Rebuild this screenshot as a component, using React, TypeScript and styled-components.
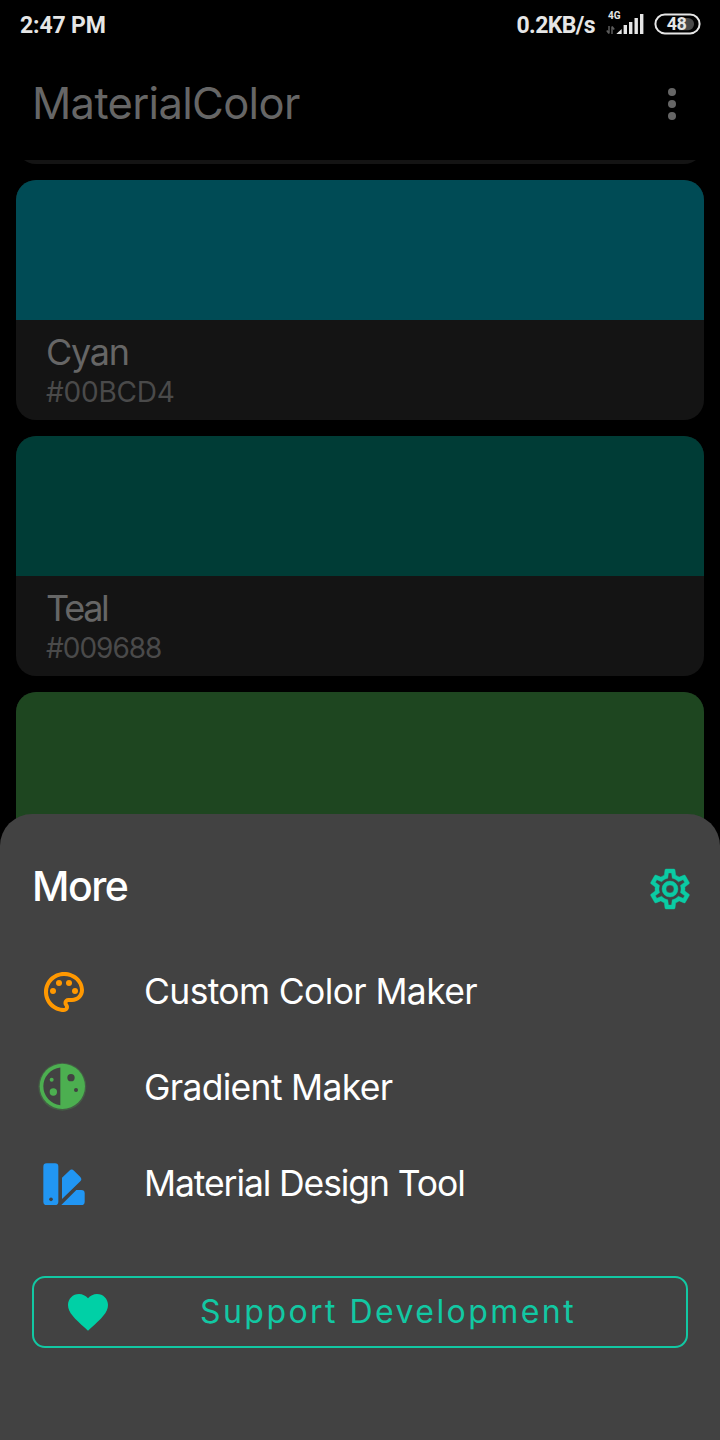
import React from "react";
import styled, { createGlobalStyle } from "styled-components";

const Global = createGlobalStyle`
  * { box-sizing: border-box; }
  html, body { margin: 0; padding: 0; background: #000; }
`;

const Screen = styled.main`
  position: relative;
  display: flex;
  flex-direction: column;
  width: 720px;
  height: 1440px;
  overflow: hidden;
  background: #000;
  font-family: Inter, "Liberation Sans", sans-serif;
`;

const StatusBar = styled.div`
  display: flex;
  align-items: center;
  height: 48px;
  padding: 2px 19px 0 20px;
  color: #e6e6e6;
  font: 700 23px/28px Roboto, sans-serif;
`;

const Clock = styled.span`
  margin: 1px auto 0 0;
  letter-spacing: -0.15px;
`;

const Speed = styled.span`
  margin: 1px 11px 0 0;
  letter-spacing: -0.6px;
`;

const StatusIcon = styled.svg`
  display: block;
  flex: none;
  margin-top: -2px;
`;

const AppBar = styled.header`
  display: flex;
  align-items: center;
  justify-content: space-between;
  height: 112px;
  padding: 0 24px 0 32px;
`;

const Title = styled.h1`
  margin: 0;
  padding-bottom: 2px;
  color: #666;
  font-size: 43.5px;
  font-weight: 400;
  line-height: 56px;
  letter-spacing: -0.67px;
`;

const List = styled.section`
  flex: 1;
  display: flex;
  flex-direction: column;
  gap: 16px;
  min-height: 0;
  padding: 0 16px;
  overflow: hidden;
`;

const Card = styled.article<{ $scrolled?: boolean }>`
  flex: none;
  height: 240px;
  margin-top: ${(p) => (p.$scrolled ? "-236px" : "0")};
  border-radius: 20px;
  overflow: hidden;
  background: #141414;
`;

const Swatch = styled.div<{ $color: string }>`
  height: 140px;
  background: ${(p) => p.$color};
`;

const CardText = styled.div`
  padding: 9px 30px;
`;

const Name = styled.div<{ $spacing: number }>`
  color: #666;
  font-size: 36px;
  line-height: 46px;
  letter-spacing: ${(p) => p.$spacing}px;
`;

const Hex = styled.div<{ $spacing: number }>`
  color: #4a4a4a;
  font-size: 28px;
  line-height: 34px;
  letter-spacing: ${(p) => p.$spacing}px;
`;

const Sheet = styled.section`
  position: absolute;
  left: 0;
  right: 0;
  bottom: 0;
  height: 626px;
  padding: 39px 32px 0;
  border-radius: 32px 32px 0 0;
  background: #424242;
`;

const SheetHeader = styled.div`
  display: flex;
  align-items: center;
  justify-content: space-between;
  height: 72px;
  margin-right: -6px;
`;

const SheetTitle = styled.h2`
  margin: 0;
  padding-bottom: 6px;
  color: #fff;
  font-size: 41px;
  font-weight: 500;
  line-height: 66px;
  letter-spacing: -1.5px;
`;

const Menu = styled.nav`
  display: flex;
  flex-direction: column;
  padding-top: 19px;
`;

const MenuItem = styled.a`
  display: flex;
  align-items: center;
  height: 96px;
`;

const MenuIcon = styled.svg`
  flex: none;
  display: block;
  width: 80px;
  height: 70px;
  margin-left: -8px;
`;

const MenuLabel = styled.span<{ $spacing: number }>`
  margin-left: 40px;
  color: #fff;
  font-size: 35.5px;
  line-height: 48px;
  letter-spacing: ${(p) => p.$spacing}px;
  white-space: nowrap;
`;

const Support = styled.button`
  display: flex;
  align-items: center;
  width: 656px;
  height: 72px;
  margin: 44px 0 0;
  padding: 0 30px;
  border: 2px solid #12c8a3;
  border-radius: 13px;
  background: transparent;
  color: #12c8a3;
  font: 400 32px/40px Inter, sans-serif;
`;

const SupportLabel = styled.span`
  margin-left: 88px;
  letter-spacing: 2.45px;
  white-space: nowrap;
`;

const bars = [
  { x: 17.6, h: 9 },
  { x: 23, h: 12 },
  { x: 28.5, h: 16 },
  { x: 34, h: 20 },
];

function Signal() {
  return (
    <StatusIcon width="47" height="28" viewBox="0 0 47 28">
      <text x="2" y="9" fill="#e6e6e6" fontFamily="Roboto" fontWeight="700" fontSize="10">4G</text>
      <path d="M3 16v7.5M0.8 20.5l2.2 3M6 24v-7.5M6 16.5l2.2 3" stroke="#5c5c5c" strokeWidth="1.5" fill="none" />
      <path d="M10.3 24l5.4-5v5z" fill="#e6e6e6" />
      {bars.map((b) => (
        <rect key={b.x} x={b.x} y={24 - b.h} width="3.4" height={b.h} fill="#e6e6e6" />
      ))}
    </StatusIcon>
  );
}

function Battery() {
  return (
    <StatusIcon width="48" height="24" viewBox="0 0 48 24">
      <path d="M26 6h9a6.1 6.1 0 0 1 0 12.2h-9z" fill="#484848" />
      <rect x="2.4" y="2.4" width="44.2" height="19" rx="9.5" fill="none" stroke="#e6e6e6" strokeWidth="2" />
      <text x="13.8" y="18.1" fill="#e6e6e6" fontFamily="Roboto" fontWeight="700" fontSize="18" textLength="20">48</text>
    </StatusIcon>
  );
}

function App() {
  return (
    <>
      <Global />
      <Screen>
        <StatusBar>
          <Clock>2:47 PM</Clock>
          <Speed>0.2KB/s</Speed>
          <Signal />
          <Battery />
        </StatusBar>
        <AppBar>
          <Title>MaterialColor</Title>
          <svg width="48" height="48" viewBox="0 0 24 24" fill="#666">
            <circle cx="12" cy="6" r="2" />
            <circle cx="12" cy="12" r="2" />
            <circle cx="12" cy="18" r="2" />
          </svg>
        </AppBar>
        <List>
          <Card $scrolled />
          <Card>
            <Swatch $color="#004b55" />
            <CardText>
              <Name $spacing={-1.3}>Cyan</Name>
              <Hex $spacing={-0.2}>#00BCD4</Hex>
            </CardText>
          </Card>
          <Card>
            <Swatch $color="#003c36" />
            <CardText>
              <Name $spacing={-2.3}>Teal</Name>
              <Hex $spacing={-1}>#009688</Hex>
            </CardText>
          </Card>
          <Card>
            <Swatch $color="#1e4620" />
          </Card>
        </List>
        <Sheet>
          <SheetHeader>
            <SheetTitle>More</SheetTitle>
            <svg width="48" height="48" viewBox="0 0 24 24" fill="#0bcba4">
              <path d="M12,8A4,4 0 0,1 16,12A4,4 0 0,1 12,16A4,4 0 0,1 8,12A4,4 0 0,1 12,8M12,10A2,2 0 0,0 10,12A2,2 0 0,0 12,14A2,2 0 0,0 14,12A2,2 0 0,0 12,10M10,22C9.75,22 9.54,21.82 9.5,21.58L9.13,18.93C8.5,18.68 7.96,18.34 7.44,17.94L4.95,18.95C4.73,19.03 4.46,18.95 4.34,18.73L2.34,15.27C2.21,15.05 2.27,14.78 2.46,14.63L4.57,12.97L4.5,12L4.57,11L2.46,9.37C2.27,9.22 2.21,8.95 2.34,8.73L4.34,5.27C4.46,5.05 4.73,4.96 4.95,5.05L7.44,6.05C7.96,5.66 8.5,5.32 9.13,5.07L9.5,2.42C9.54,2.18 9.75,2 10,2H14C14.25,2 14.46,2.18 14.5,2.42L14.87,5.07C15.5,5.32 16.04,5.66 16.56,6.05L19.05,5.05C19.27,4.96 19.54,5.05 19.66,5.27L21.66,8.73C21.79,8.95 21.73,9.22 21.54,9.37L19.43,11L19.5,12L19.43,13L21.54,14.63C21.73,14.78 21.79,15.05 21.66,15.27L19.66,18.73C19.54,18.95 19.27,19.04 19.05,18.95L16.56,17.95C16.04,18.34 15.5,18.68 14.87,18.93L14.5,21.58C14.46,21.82 14.25,22 14,22H10M11.25,4L10.88,6.61C9.68,6.86 8.62,7.5 7.85,8.39L5.44,7.35L4.69,8.65L6.8,10.2C6.4,11.37 6.4,12.64 6.8,13.8L4.68,15.36L5.43,16.66L7.86,15.62C8.63,16.5 9.68,17.14 10.87,17.38L11.24,20H12.76L13.13,17.39C14.32,17.14 15.37,16.5 16.14,15.62L18.57,16.66L19.32,15.36L17.2,13.81C17.6,12.64 17.6,11.37 17.2,10.2L19.31,8.65L18.56,7.35L16.15,8.39C15.38,7.5 14.32,6.86 13.12,6.61L12.75,4H11.25Z" stroke="#0bcba4" strokeWidth="0.2" />
            </svg>
          </SheetHeader>
          <Menu>
            <MenuItem>
              <MenuIcon viewBox="-8 -5.5 40 35" fill="#ff9800">
                <path d="M12 22C6.49 22 2 17.51 2 12S6.49 2 12 2s10 4.04 10 9c0 3.31-2.69 6-6 6h-1.77c-.28 0-.5.22-.5.5 0 .12.05.23.13.33.41.47.64 1.06.64 1.67A2.5 2.5 0 0 1 12 22zm0-18c-4.41 0-8 3.59-8 8s3.59 8 8 8c.28 0 .5-.22.5-.5a.54.54 0 0 0-.14-.35c-.41-.46-.63-1.05-.63-1.65a2.5 2.5 0 0 1 2.5-2.5H16c2.21 0 4-1.79 4-4 0-3.86-3.59-7-8-7z" />
                <circle cx="6.5" cy="11.5" r="1.5" />
                <circle cx="9.5" cy="7.5" r="1.5" />
                <circle cx="14.5" cy="7.5" r="1.5" />
                <circle cx="17.5" cy="11.5" r="1.5" />
              </MenuIcon>
              <MenuLabel $spacing={-0.64}>Custom Color Maker</MenuLabel>
            </MenuItem>
            <MenuItem>
              <MenuIcon viewBox="0 8 240 210" fill="#4caf50">
                <circle cx="115" cy="109" r="72" opacity="0.25" />
                <circle cx="115" cy="108" r="68" />
                <path d="M109 51.32a57 57 0 0 0 0 113.36z" fill="#424242" />
                <circle cx="83" cy="88" r="6" />
                <circle cx="88" cy="125" r="11" />
                <circle cx="141" cy="82" r="11" fill="#424242" />
                <circle cx="156" cy="119" r="6" fill="#424242" />
              </MenuIcon>
              <MenuLabel $spacing={-0.7}>Gradient Maker</MenuLabel>
            </MenuItem>
            <MenuItem>
              <MenuIcon viewBox="0 -4 240 210" fill="#2196f3">
                <rect x="58" y="39" width="45" height="125" rx="10" />
                <circle cx="81" cy="147" r="5.5" fill="#424242" />
                <path d="M114 82l22-21q7-7 14 0l19 19q6 7 0 13l-55 53z" />
                <path d="M112 164l45-45h15q10 0 10 10v25q0 10-10 10z" />
              </MenuIcon>
              <MenuLabel $spacing={-1.1}>Material Design Tool</MenuLabel>
            </MenuItem>
          </Menu>
          <Support>
            <svg width="48" height="48" viewBox="0 0 24 24" fill="#00d0a6">
              <path d="M12 21.35l-1.45-1.32C5.4 15.36 2 12.28 2 8.5 2 5.42 4.42 3 7.5 3c1.74 0 3.41.81 4.5 2.09C13.09 3.81 14.76 3 16.5 3 19.58 3 22 5.42 22 8.5c0 3.78-3.4 6.86-8.55 11.54L12 21.35z" />
            </svg>
            <SupportLabel>Support Development</SupportLabel>
          </Support>
        </Sheet>
      </Screen>
    </>
  );
}

export default App;
